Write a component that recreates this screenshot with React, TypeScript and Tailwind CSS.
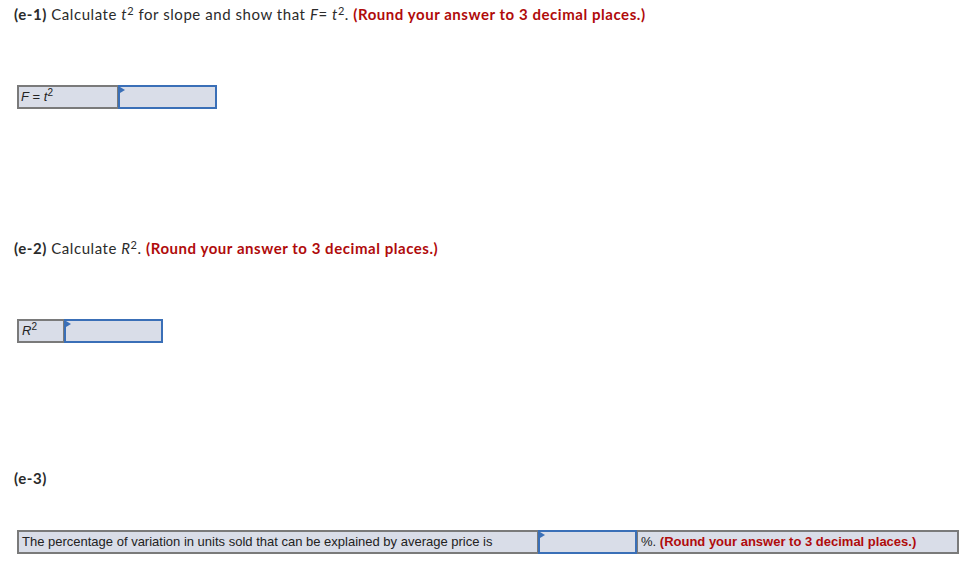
import React from "react";

const head = "font-['Lato','Open_Sans',sans-serif] text-[15px] leading-[20px] tracking-[0.55px] text-[#2b2b2b]";
const tbl = "font-['Liberation_Sans',Arial,sans-serif] text-[13px] text-[#222]";

function InputCell({ w }: { w: string }) {
  return (
    <div className={`relative h-full border-2 border-[#3a6fb7] bg-[#d9dde8] ${w}`}>
      <div className="absolute left-0 top-0 h-0 w-0 border-y-[3px] border-l-[5px] border-y-transparent border-l-[#3a6fb7]" />
    </div>
  );
}

export default function App() {
  return (
    <div className="min-h-[567px] w-[971px] bg-white pl-[14px] pt-[4px]">
      <p className={head}>
        <span className="font-bold">(e-1)</span> Calculate <i>t</i>
        <sup className="text-[11px]">2</sup> for slope and show that <i>F</i>= <i>t</i>
        <sup className="text-[11px]">2</sup>.{" "}
        <span className="font-bold text-[#b00b0b]">(Round your answer to 3 decimal places.)</span>
      </p>

      <div className={`ml-[3px] mt-[61px] flex h-[24px] w-[200px] ${tbl}`}>
        <div className="flex h-full w-[101px] items-center border-2 border-r border-[#7a7a7a] bg-[#d9dde8] pl-[2px]">
          <span>
            <i>F</i> = <i>t</i>
            <sup className="text-[10px]">2</sup>
          </span>
        </div>
        <InputCell w="w-[99px]" />
      </div>

      <p className={`mt-[129px] ${head}`}>
        <span className="font-bold">(e-2)</span> Calculate <i>R</i>
        <sup className="text-[11px]">2</sup>.{" "}
        <span className="font-bold text-[#b00b0b]">(Round your answer to 3 decimal places.)</span>
      </p>

      <div className={`ml-[3px] mt-[61px] flex h-[24px] w-[146px] ${tbl}`}>
        <div className="flex h-full w-[47px] items-center border-2 border-r border-[#7a7a7a] bg-[#d9dde8] pl-[3px]">
          <span>
            <i>R</i>
            <sup className="text-[10px]">2</sup>
          </span>
        </div>
        <InputCell w="w-[99px]" />
      </div>

      <p className={`mt-[125px] ${head} font-bold`}>(e-3)</p>

      <div className={`ml-[3px] mt-[42px] flex h-[24px] w-[942px] ${tbl}`}>
        <div className="flex h-full w-[521px] items-center border-2 border-r border-[#7a7a7a] bg-[#d9dde8] pl-[3px]">
          The percentage of variation in units sold that can be explained by average price is
        </div>
        <InputCell w="w-[99px]" />
        <div className="flex h-full flex-1 items-center border-2 border-l border-[#7a7a7a] bg-[#d9dde8] pl-[3px]">
          %.&nbsp;<span className="font-bold text-[#b00b0b]">(Round your answer to 3 decimal places.)</span>
        </div>
      </div>
    </div>
  );
}
